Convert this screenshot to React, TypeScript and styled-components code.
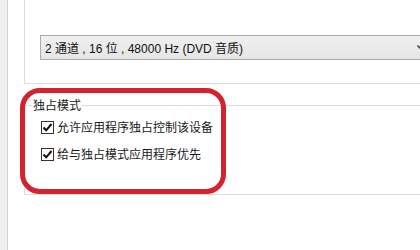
import React from "react";
import styled, { createGlobalStyle } from "styled-components";

const GlobalStyle = createGlobalStyle`
  html, body {
    margin: 0;
    padding: 0;
    background: #ffffff;
    overflow: hidden;
  }
  body {
    font-family: "Noto Sans CJK SC", "Noto Sans", "Liberation Sans", sans-serif;
    font-size: 12px;
    color: #1a1a1a;
  }
`;

const Page = styled.div`
  position: relative;
  display: flex;
  width: 420px;
  height: 250px;
  overflow: hidden;
  background: #ffffff;
`;

const SideStrip = styled.div`
  width: 7px;
  flex-shrink: 0;
  background: #f0f0f0;
  border-right: 1px solid #d4d4d4;
`;

const Content = styled.div`
  flex: 1;
  display: flex;
  flex-direction: column;
  padding-left: 16px;
  min-width: 0;
`;

const FormatGroup = styled.div`
  height: 84px;
  box-sizing: border-box;
  margin-right: -20px;
  border-left: 1px solid #dcdcdc;
  border-bottom: 1px solid #dcdcdc;
  padding-left: 8px;
  overflow: hidden;
`;

const Hint = styled.div`
  margin-top: -13px;
  line-height: 14px;
  color: #b0b0b0;
  white-space: nowrap;
`;

const Dropdown = styled.div`
  margin-top: 34px;
  margin-left: 7px;
  width: 392px;
  height: 25px;
  box-sizing: border-box;
  display: flex;
  align-items: center;
  justify-content: space-between;
  padding: 0 7px 0 4px;
  border: 1px solid #acacac;
  background: linear-gradient(#f0f0f0, #e5e5e5);
  font-family: "Liberation Sans", "Noto Sans CJK SC", sans-serif;
  font-size: 12px;
  color: #111;
  white-space: nowrap;
`;

const Group = styled.fieldset`
  margin: 13px -20px 0 0;
  padding: 0;
  border: 1px solid #dcdcdc;
  border-right: none;
  min-width: 0;
`;

const Legend = styled.legend`
  margin-left: 7px;
  padding: 0 1px;
  line-height: 16px;
  color: #1a1a1a;
`;

const OptionList = styled.div`
  display: flex;
  flex-direction: column;
  gap: 11px;
  padding: 6px 0 32px 16px;
`;

const Option = styled.label`
  display: flex;
  align-items: center;
  gap: 3px;
  height: 16px;
  line-height: 16px;
  color: #1a1a1a;
`;

const Box = styled.span`
  width: 13px;
  height: 13px;
  box-sizing: border-box;
  border: 1px solid #333;
  background: #fff;
  display: flex;
  align-items: center;
  justify-content: center;
`;

const Highlight = styled.div`
  position: absolute;
  left: 20px;
  top: 88px;
  width: 206px;
  height: 106px;
  box-sizing: border-box;
  border: 5px solid #d2232f;
  border-radius: 20px;
  pointer-events: none;
`;

const Check = () => (
  <svg width="11" height="11" viewBox="0 0 11 11">
    <path d="M1.5 5.5 L4.2 8.3 L9.5 2" fill="none" stroke="#111" strokeWidth="2" />
  </svg>
);

const Chevron = () => (
  <svg width="7" height="5" viewBox="0 0 7 5">
    <path d="M0.5 0.5 L3.5 3.8 L6.5 0.5" fill="none" stroke="#333" strokeWidth="1.4" />
  </svg>
);

const options = ["允许应用程序独占控制该设备", "给与独占模式应用程序优先"];

const App = () => {
  return (
    <>
      <GlobalStyle />
      <Page>
        <SideStrip />
        <Content>
          <FormatGroup>
            <Hint>选择在共享模式中运行时使用的采样频率和位深度。</Hint>
            <Dropdown>
              <span>2 通道 , 16 位 , 48000 Hz (DVD 音质)</span>
              <Chevron />
            </Dropdown>
          </FormatGroup>
          <Group>
            <Legend>独占模式</Legend>
            <OptionList>
              {options.map((text) => (
                <Option key={text}>
                  <Box>
                    <Check />
                  </Box>
                  {text}
                </Option>
              ))}
            </OptionList>
          </Group>
        </Content>
        <Highlight />
      </Page>
    </>
  );
};

export default App;
